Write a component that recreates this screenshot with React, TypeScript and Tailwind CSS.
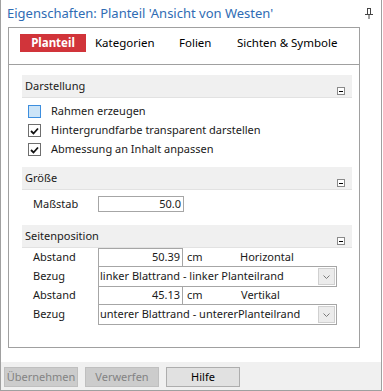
import React from "react";

const Collapse = () => (
  <div className="absolute right-[7px] bottom-[2px] w-[8px] h-[8px] border border-[#8a8a8a] bg-white flex items-center justify-center">
    <div className="w-[4px] h-px bg-black" />
  </div>
);

const SectionHeader = ({ title }: { title: string }) => (
  <div className="relative h-[23px] w-[330px] bg-[#f0f0f0] border-b border-[#e2e2e2] pl-[3px] pt-[4px] leading-[14px] text-[#1a1a1a]">
    {title}
    <Collapse />
  </div>
);

const Check = ({ checked, hover }: { checked?: boolean; hover?: boolean }) => (
  <div
    className={
      hover
        ? "w-[13px] h-[13px] border border-[#3d8ede] bg-[#cce4f7]"
        : "w-[13px] h-[13px] border border-[#6e6e6e] bg-white flex items-center justify-center"
    }
  >
    {checked && (
      <svg width="9" height="8" viewBox="0 0 9 8">
        <path d="M1 4 L3.5 6.5 L8 1.5" stroke="#111" strokeWidth="1.8" fill="none" />
      </svg>
    )}
  </div>
);

const Chevron = () => (
  <svg width="7" height="4" viewBox="0 0 7 4">
    <path d="M0.5 0.5 L3.5 3.5 L6.5 0.5" stroke="#7a7a7a" strokeWidth="1" fill="none" />
  </svg>
);

const Dropdown = ({ text }: { text: string }) => (
  <div className="w-[239px] h-full border border-[#a6a6a6] bg-white flex items-stretch">
    <div className="flex-1 pl-[1px] flex items-center whitespace-nowrap overflow-hidden">{text}</div>
    <div className="w-[17px] my-[1px] mr-[1px] bg-[#ececec] border border-[#d0d0d0] flex items-center justify-center">
      <Chevron />
    </div>
  </div>
);

const NumBox = ({ value }: { value: string }) => (
  <div className="w-[85px] h-full border border-[#a6a6a6] bg-white flex items-center justify-end pr-[2px]">
    {value}
  </div>
);

export default function App() {
  return (
    <div className="w-[382px] h-[391px] bg-white border-l border-r border-b border-[#a0a0a0] flex flex-col font-['Noto_Sans',sans-serif] text-[11px] text-[#1a1a1a] overflow-hidden">
      {/* Title */}
      <div className="h-[27px] flex items-start pl-[6px] pr-[6px] pt-[5px] shrink-0">
        <div className="text-[13px] leading-[16px] text-[#2f6cb4] flex-1">Eigenschaften: Planteil 'Ansicht von Westen'</div>
        <svg width="10" height="11" viewBox="0 0 10 11" className="mt-[3px] mr-[1px]">
          <rect x="3.5" y="0.5" width="3" height="6" fill="none" stroke="#444" />
          <line x1="1" y1="6.5" x2="9" y2="6.5" stroke="#444" />
          <line x1="5" y1="7" x2="5" y2="11" stroke="#444" />
        </svg>
      </div>

      {/* Panel */}
      <div className="ml-[7px] w-[352px] h-[321px] border border-[#a0a0a0] shrink-0 flex flex-col">
        {/* Tabs */}
        <div className="h-[37px] border-b border-[#a0a0a0] pt-[6px] pl-[11px] flex items-start text-[11.5px] text-black">
          <div className="w-[66px] h-[18px] bg-[#d1343a] text-white font-bold flex items-center justify-center leading-none">Planteil</div>
          <div className="w-[84px] h-[18px] pl-[9px] flex items-center leading-none">Kategorien</div>
          <div className="w-[58px] h-[18px] pl-[9px] flex items-center leading-none">Folien</div>
          <div className="h-[18px] pl-[9px] flex items-center leading-none whitespace-nowrap">Sichten &amp; Symbole</div>
        </div>

        <div className="pl-[13px] pt-[10px] flex flex-col">
          <SectionHeader title="Darstellung" />
          <div className="mt-[4px] flex flex-col">
            <div className="h-[19px] flex items-center pl-[6px] gap-[10px]">
              <Check hover />
              <span>Rahmen erzeugen</span>
            </div>
            <div className="h-[19px] flex items-center pl-[6px] gap-[10px]">
              <Check checked />
              <span>Hintergrundfarbe transparent darstellen</span>
            </div>
            <div className="h-[19px] flex items-center pl-[6px] gap-[10px]">
              <Check checked />
              <span>Abmessung an Inhalt anpassen</span>
            </div>
          </div>

          <div className="mt-[8px]">
            <SectionHeader title="Größe" />
          </div>
          <div className="h-[35px] pt-[6px] flex items-start">
            <div className="w-[76px] pl-[11px] h-[16px] flex items-center">Maßstab</div>
            <div className="w-[86px] h-[16px] border border-[#a6a6a6] bg-white flex items-center justify-end pr-[2px]">50.0</div>
          </div>

          <SectionHeader title="Seitenposition" />
          <div className="flex flex-col">
            <div className="h-[19px] flex items-center">
              <div className="w-[76px] pl-[11px]">Abstand</div>
              <NumBox value="50.39" />
              <div className="w-[57px] pl-[4px]">cm</div>
              <div>Horizontal</div>
            </div>
            <div className="h-[21px] -mt-px flex items-center">
              <div className="w-[76px] pl-[11px]">Bezug</div>
              <Dropdown text="linker Blattrand - linker Planteilrand" />
            </div>
            <div className="h-[19px] -mt-px flex items-center">
              <div className="w-[76px] pl-[11px]">Abstand</div>
              <NumBox value="45.13" />
              <div className="w-[57px] pl-[4px]">cm</div>
              <div className="pl-[1px]">Vertikal</div>
            </div>
            <div className="h-[21px] -mt-px flex items-center">
              <div className="w-[76px] pl-[11px]">Bezug</div>
              <Dropdown text="unterer Blattrand - untererPlanteilrand" />
            </div>
          </div>
        </div>
      </div>

      {/* Bottom bar */}
      <div className="mt-[14px] h-[28px] bg-[#f0f0f0] pt-[5px] pl-[3px] flex gap-[7px] shrink-0">
        <div className="w-[74px] h-[20px] bg-[#cccccc] border border-[#bfbfbf] text-[#838383] flex items-center justify-center">Übernehmen</div>
        <div className="w-[74px] h-[20px] bg-[#cccccc] border border-[#bfbfbf] text-[#838383] flex items-center justify-center">Verwerfen</div>
        <div className="w-[74px] h-[20px] bg-[#e1e1e1] border border-[#adadad] text-black flex items-center justify-center">Hilfe</div>
      </div>
    </div>
  );
}
